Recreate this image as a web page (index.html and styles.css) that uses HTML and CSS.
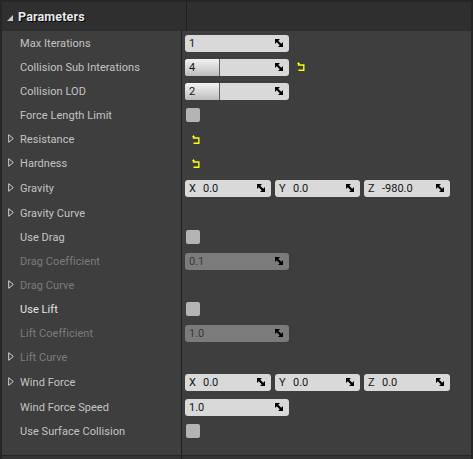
FILE: index.html
```html
<!DOCTYPE html>
<html>
<head>
<meta charset="utf-8">
<link rel="stylesheet" href="styles.css">
</head>
<body>
<svg width="0" height="0" class="defs">
  <defs>
    <symbol id="spin" viewBox="0 0 8 8">
      <polygon points="0,0 5,0 0,5" fill="#000"/>
      <polygon points="8,8 3,8 8,3" fill="#000"/>
      <line x1="1" y1="1" x2="7" y2="7" stroke="#000" stroke-width="2.2"/>
    </symbol>
    <symbol id="reset" viewBox="0 0 8 9">
      <path d="M1.5 0 L0 2 H3 Z" fill="#ffff00"/>
      <path d="M1.5 1.5 V3 H6.8 V8.2 H1.5" fill="none" stroke="#ffff00" stroke-width="1.4"/>
    </symbol>
    <symbol id="expand" viewBox="0 0 6 9">
      <path d="M0.7 0.7 L5.3 4.5 L0.7 8.3 Z" fill="none" stroke="#d0d0d0" stroke-width="1"/>
    </symbol>
  </defs>
</svg>
<div class="panel">
  <div class="header">
    <div class="name-cell head-name">
      <span class="collapse-tri"></span>
      <span class="head-title">Parameters</span>
    </div>
    <div class="value-cell"></div>
  </div>

  <div class="row">
    <div class="name-cell"><span class="label">Max Iterations</span></div>
    <div class="value-cell">
      <div class="field"><span class="ftext">1</span><svg class="spin"><use href="#spin"/></svg></div>
    </div>
  </div>

  <div class="row">
    <div class="name-cell"><span class="label">Collision Sub Interations</span></div>
    <div class="value-cell">
      <div class="field slider"><div class="handle"><span class="ftext">4</span></div><svg class="spin"><use href="#spin"/></svg></div>
      <svg class="reset reset-after"><use href="#reset"/></svg>
    </div>
  </div>

  <div class="row">
    <div class="name-cell"><span class="label">Collision LOD</span></div>
    <div class="value-cell">
      <div class="field slider"><div class="handle"><span class="ftext">2</span></div><svg class="spin"><use href="#spin"/></svg></div>
    </div>
  </div>

  <div class="row">
    <div class="name-cell"><span class="label">Force Length Limit</span></div>
    <div class="value-cell"><div class="check"></div></div>
  </div>

  <div class="row">
    <div class="name-cell"><svg class="exp"><use href="#expand"/></svg><span class="label">Resistance</span></div>
    <div class="value-cell"><svg class="reset reset-only"><use href="#reset"/></svg></div>
  </div>

  <div class="row">
    <div class="name-cell"><svg class="exp"><use href="#expand"/></svg><span class="label">Hardness</span></div>
    <div class="value-cell"><svg class="reset reset-only"><use href="#reset"/></svg></div>
  </div>

  <div class="row tall">
    <div class="name-cell"><svg class="exp"><use href="#expand"/></svg><span class="label">Gravity</span></div>
    <div class="value-cell vec">
      <div class="field vx"><span class="axis">X</span><span class="ftext">0.0</span><svg class="spin"><use href="#spin"/></svg></div>
      <div class="field vy"><span class="axis">Y</span><span class="ftext">0.0</span><svg class="spin"><use href="#spin"/></svg></div>
      <div class="field vz"><span class="axis">Z</span><span class="ftext">-980.0</span><svg class="spin"><use href="#spin"/></svg></div>
    </div>
  </div>

  <div class="row">
    <div class="name-cell"><svg class="exp"><use href="#expand"/></svg><span class="label">Gravity Curve</span></div>
    <div class="value-cell"></div>
  </div>

  <div class="row">
    <div class="name-cell"><span class="label">Use Drag</span></div>
    <div class="value-cell"><div class="check"></div></div>
  </div>

  <div class="row disabled">
    <div class="name-cell"><span class="label">Drag Coefficient</span></div>
    <div class="value-cell">
      <div class="field"><span class="ftext">0.1</span><svg class="spin"><use href="#spin"/></svg></div>
    </div>
  </div>

  <div class="row disabled">
    <div class="name-cell"><svg class="exp"><use href="#expand"/></svg><span class="label">Drag Curve</span></div>
    <div class="value-cell"></div>
  </div>

  <div class="row">
    <div class="name-cell"><span class="label bright">Use Lift</span></div>
    <div class="value-cell"><div class="check"></div></div>
  </div>

  <div class="row disabled">
    <div class="name-cell"><span class="label">Lift Coefficient</span></div>
    <div class="value-cell">
      <div class="field"><span class="ftext">1.0</span><svg class="spin"><use href="#spin"/></svg></div>
    </div>
  </div>

  <div class="row disabled">
    <div class="name-cell"><svg class="exp"><use href="#expand"/></svg><span class="label">Lift Curve</span></div>
    <div class="value-cell"></div>
  </div>

  <div class="row tall">
    <div class="name-cell"><svg class="exp"><use href="#expand"/></svg><span class="label">Wind Force</span></div>
    <div class="value-cell vec">
      <div class="field vx"><span class="axis">X</span><span class="ftext">0.0</span><svg class="spin"><use href="#spin"/></svg></div>
      <div class="field vy"><span class="axis">Y</span><span class="ftext">0.0</span><svg class="spin"><use href="#spin"/></svg></div>
      <div class="field vz"><span class="axis">Z</span><span class="ftext">0.0</span><svg class="spin"><use href="#spin"/></svg></div>
    </div>
  </div>

  <div class="row">
    <div class="name-cell"><span class="label">Wind Force Speed</span></div>
    <div class="value-cell">
      <div class="field"><span class="ftext">1.0</span><svg class="spin"><use href="#spin"/></svg></div>
    </div>
  </div>

  <div class="row">
    <div class="name-cell"><span class="label">Use Surface Collision</span></div>
    <div class="value-cell"><div class="check"></div></div>
  </div>

  <div class="row filler">
    <div class="name-cell"></div>
    <div class="value-cell"></div>
  </div>
  <div class="bottom">
    <div class="name-cell"></div>
    <div class="value-cell"></div>
  </div>
</div>
</body>
</html>
```

FILE: styles.css
```css
html, body {
  margin: 0;
  padding: 0;
  background: #262626;
  width: 473px;
  height: 459px;
  overflow: hidden;
}

.defs {
  position: absolute;
  width: 0;
  height: 0;
}

body {
  padding: 2px 0 0 2px;
  box-sizing: border-box;
  font-family: Roboto, "Liberation Sans", sans-serif;
}

.panel {
  width: 469px;
  background: #3e3e3e;
}

.header {
  display: flex;
  height: 29px;
  background: #2f2f2f;
}

.row,
.bottom {
  display: flex;
  height: 24px;
}

.row.tall {
  height: 26px;
}

.row.filler {
  height: 12px;
}

.bottom {
  height: 3px;
  border-top: 1px solid #262626;
  background: #333333;
}

.name-cell {
  width: 179px;
  flex: none;
  display: flex;
  align-items: center;
  position: relative;
  border-right: 1px solid #1f1f1f;
}

.value-cell {
  flex: 1;
  display: flex;
  align-items: center;
  padding-left: 3px;
}

.head-name {
  padding-left: 5px;
}

.collapse-tri {
  width: 0;
  height: 0;
  border-left: 6px solid transparent;
  border-bottom: 6px solid #c8c8c8;
  margin-top: 3px;
  margin-right: 5px;
}

.head-title {
  color: #e8e8e8;
  font-weight: bold;
  font-size: 12.5px;
  text-shadow: 1px 1px 0 #000;
  letter-spacing: 0.15px;
}

.label {
  color: #c4c4c4;
  font-size: 11px;
  margin-left: 18px;
  letter-spacing: 0.05px;
}

.label.bright {
  color: #e4e4e4;
}

.exp {
  position: absolute;
  left: 6px;
  top: 50%;
  margin-top: -5px;
  width: 6px;
  height: 9px;
}

.field {
  position: relative;
  display: flex;
  align-items: center;
  width: 104px;
  height: 17px;
  background: #d9d9d9;
  border-radius: 3px;
  box-sizing: border-box;
  color: #161616;
  font-size: 11px;
}

.ftext {
  padding-left: 4px;
}

.spin {
  position: absolute;
  right: 6px;
  top: 4px;
  width: 8px;
  height: 8px;
}

.slider .handle {
  width: 35px;
  height: 17px;
  display: flex;
  align-items: center;
  border-radius: 3px 0 0 3px;
  background: linear-gradient(#f2f2f2, #d6d6d6 55%, #bcbcbc);
  border-right: 1px solid #5e5e5e;
  box-sizing: border-box;
}

.reset {
  width: 8px;
  height: 9px;
}

.reset-after {
  margin-left: 8px;
  margin-top: -2px;
}

.reset-only {
  margin-left: 7px;
}

.check {
  width: 14px;
  height: 14px;
  margin-left: 1px;
  background: #b4b4b4;
  border-radius: 2px;
}

.vec {
  gap: 4px;
}

.vec .field {
  width: 86px;
}

.vec .vy {
  width: 85px;
}

.axis {
  padding-left: 4px;
  width: 10px;
}

.vec .ftext {
  padding-left: 4px;
}

.disabled .label {
  color: #7c7c7c;
}

.disabled .field {
  background: #7b7b7b;
  color: #3c3c3c;
}
```
